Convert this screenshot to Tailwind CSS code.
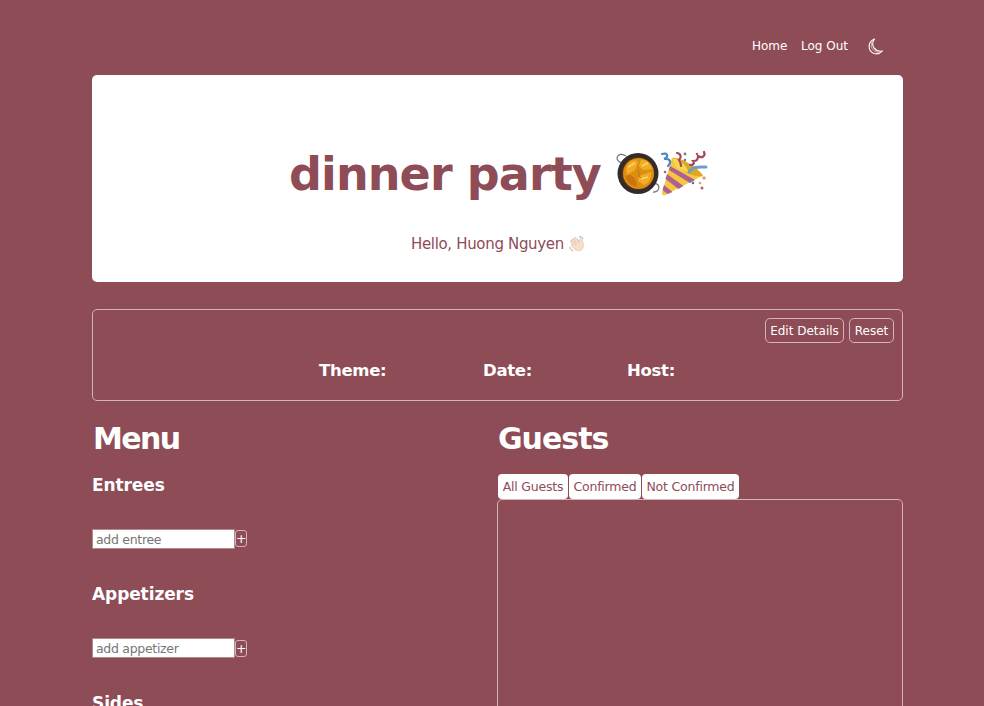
<!DOCTYPE html>
<html lang="en">
<head>
<meta charset="utf-8">
<title>dinner party</title>
<script src="https://cdn.jsdelivr.net/npm/@tailwindcss/browser@4"></script>
</head>
<body class="h-[706px] overflow-hidden bg-[#8e4c56] pl-[92px] font-['Verdana','DejaVu_Sans',sans-serif] text-white">
<div class="h-[706px] w-[811px] overflow-hidden">
  <nav class="flex h-[75px] items-start justify-end pt-[37px] pr-[19px] text-[12px] leading-[18px]">
    <a class="mr-[13px] w-[36px] whitespace-nowrap">Home</a>
    <a class="mr-[19px] w-[48px] whitespace-nowrap">Log Out</a>
    <svg class="mt-[1px] h-[17px] w-[16px]" viewBox="0 0 16 17" fill="none" stroke="#fff" stroke-width="1.100" stroke-linejoin="round"><path d="M6.500 1C-.5 3.500-.5 13 6 15.500c3.500 1 6.500-.3 8.500-2.500C8 14.500 1.500 8 6.500 1Z"/><path d="M4.500 3C1 8 5 14.500 11.500 14.500" stroke-width=".6"/></svg>
  </nav>
  <header class="flex h-[207px] flex-col items-center rounded-[5px] bg-white text-[#8e4c56]">
    <h1 class="mt-[70px] ml-[2px] flex h-[58px] items-center text-[46px] font-bold leading-[58px]">
      <span class="w-[327px] whitespace-nowrap tracking-[-0.9px]">dinner party</span>
      <svg class="h-[48px] w-[92px]" viewBox="0 0 92 48">
        <g fill="none" stroke="#777" stroke-width="1.300"><path d="M7 13C-3 12 1 0 10 6"/><path d="M36 34c9-3 9 9 1 8"/></g>
        <circle cx="22" cy="23.500" r="20.500" fill="#352a2a"/><circle cx="22" cy="23.500" r="16.500" fill="#54321c"/><circle cx="22.500" cy="23.500" r="15.500" fill="#dc8e12"/>
        <path d="M10 19c2-8 9-11 12-7l-3 8-8 5ZM25 10c5-1 10 4 11 9l-9 1-4-4ZM23 26l12-4c1 5-2 12-7 13l-6-4Z" fill="#f1ad26"/>
        <path d="M10 26c5-3 10 2 11 10-6 1-11-4-11-10Z" fill="#c9740f"/><path d="M12 17l7-4M26 16l6-3M25 29l7-2" stroke="#ffd563" stroke-width="1.500"/><path d="M22 20c2 3-1 5 3 8" stroke="#b97518" fill="none"/>
        <path d="M56 8 46 43c0 3 3 3 5 1l35-18Z" fill="#f5c83b"/><path d="m51 24-1.500 5 13 10 5-3ZM54 16l-1 4 21 13 5-3Z" fill="#ad6094"/><path d="m48 35-1.500 5 5 4 5-2Z" fill="#ad6094"/><path d="M56 8c8-2 29 12 31 18-9 2-25-5-31-18Z" fill="#e0a822"/><path d="M56 8c10 2 14 8 17 15l-12-5Z" fill="#f5d751"/>
        <g fill="none" stroke-width="2.200" stroke-linecap="round"><path d="M46 4c6-2 7 3 2 5 6-1 8 3 4 7" stroke="#5086bd"/><path d="M73 22c4-6 10-5 17-5" stroke="#6e9dc9" stroke-width="3"/><path d="M61 3c5 1 4 5 2 7 2 3 2 4 2 6M88 2c2 5-3 6-6 4 0 5-2 5-5 5 2 3 0 4-3 4" stroke="#a34758"/></g>
        <g fill="#b45b70"><circle cx="81" cy="4" r="1.300"/><circle cx="49" cy="22" r="1.300"/><circle cx="86" cy="38" r="1.500"/></g><g fill="#dda274"><circle cx="88" cy="28" r="1.800"/><circle cx="84" cy="33" r="1.300"/></g><circle cx="77" cy="33" r="1.300" fill="#477caf"/><circle cx="69" cy="4" r="1.400" fill="#947085"/><circle cx="69" cy="10" r="1.200" fill="#477caf"/>
      </svg>
    </h1>
    <p class="mt-[31px] ml-px flex items-center text-[15px] leading-5"><span class="w-[158px] whitespace-nowrap tracking-[-0.33px]">Hello, Huong Nguyen</span>
      <svg class="h-4 w-4" viewBox="0 0 16 16"><path d="M4 9 1.500 6C.8 4.500 2 4 3 5L2.500 3.500C3 2 4.500 2.500 5 4L5 2C6 .5 7.500 1.500 8 3l3 3-.3-2.500C11.500 1.500 13 2.500 13.500 5c1 3 1.500 5 .3 7.500-2 3.500-7 2.500-9 0L2.500 10C2 8.500 3 8.200 4 9Z" fill="#f6dfca" stroke="#dbb7a5" stroke-width=".5"/><path d="m3 5 4 4M5 4l3 4M8 3l2 4" stroke="#d5ac99" stroke-width=".5"/><path d="M1 11c0 2 1 3 3 4M10 1c2-.5 3 0 4 2" fill="none" stroke="#a5a1a6"/></svg>
    </p>
  </header>
  <section class="mt-[27px] h-[92px] rounded-[5px] border border-[#d3b4b8] pt-2 pr-2">
    <div class="flex justify-end gap-[5px] text-[12px] leading-[23px]">
      <button class="h-[25px] w-[79px] whitespace-nowrap rounded-[5px] border border-[#d3b4b8] pt-px">Edit Details</button>
      <button class="h-[25px] w-[45px] rounded-[5px] border border-[#d3b4b8] pt-px">Reset</button>
    </div>
    <div class="mt-[17px] ml-[226px] flex gap-[96px] text-[16.500px] font-bold leading-[22px] tracking-[-0.3px]">
      <h3 class="w-[68px] whitespace-nowrap">Theme:</h3><h3 class="w-[48px] whitespace-nowrap">Date:</h3><h3 class="w-[48px] whitespace-nowrap">Host:</h3>
    </div>
  </section>
  <main class="grid grid-cols-[405px_406px]">
    <section>
      <h2 class="mt-[20px] ml-px h-[36px] text-[30px] font-bold leading-[36px] tracking-[-1.600px]">Menu</h2>
      <h3 class="mt-[17px] h-[22px] text-[17px] font-bold leading-[22px] tracking-[-0.1px]">Entrees</h3>
      <div class="mt-[33px] flex h-[20px] items-start"><input class="h-[20px] w-[143px] rounded-[1px] border border-[#b18b90] bg-white px-[3px] text-[12.500px] tracking-[-0.3px] placeholder:text-[#757575]" placeholder="add entree"><button class="mt-px h-[17px] w-[12px] rounded-[3px] border border-[#d3b4b8] text-[12.500px] leading-[16px]">+</button></div>
      <h3 class="mt-[34px] h-[22px] text-[17px] font-bold leading-[22px] tracking-[-0.1px]">Appetizers</h3>
      <div class="mt-[33px] flex h-[20px] items-start"><input class="h-[20px] w-[143px] rounded-[1px] border border-[#b18b90] bg-white px-[3px] text-[12.500px] tracking-[-0.3px] placeholder:text-[#757575]" placeholder="add appetizer"><button class="mt-[2px] h-[17px] w-[12px] rounded-[3px] border border-[#d3b4b8] text-[12.500px] leading-[16px]">+</button></div>
      <h3 class="mt-[34px] h-[22px] text-[17px] font-bold leading-[22px] tracking-[-0.1px]">Sides</h3>
    </section>
    <section>
      <h2 class="mt-[20px] ml-px h-[36px] text-[30px] font-bold leading-[36px] tracking-[-1px]">Guests</h2>
      <div class="mt-[17px] ml-px flex gap-px text-[12.500px] leading-[25px] tracking-[-0.2px] text-[#8e4c56]">
        <button class="h-[25px] w-[70px] whitespace-nowrap rounded-[4px] bg-white">All Guests</button><button class="h-[25px] w-[72px] rounded-[4px] bg-white">Confirmed</button><button class="h-[25px] w-[97px] whitespace-nowrap rounded-[4px] bg-white">Not Confirmed</button>
      </div>
      <div class="h-[400px] rounded-[5px] border border-[#d3b4b8]"></div>
    </section>
  </main>
</div>
</body>
</html>
